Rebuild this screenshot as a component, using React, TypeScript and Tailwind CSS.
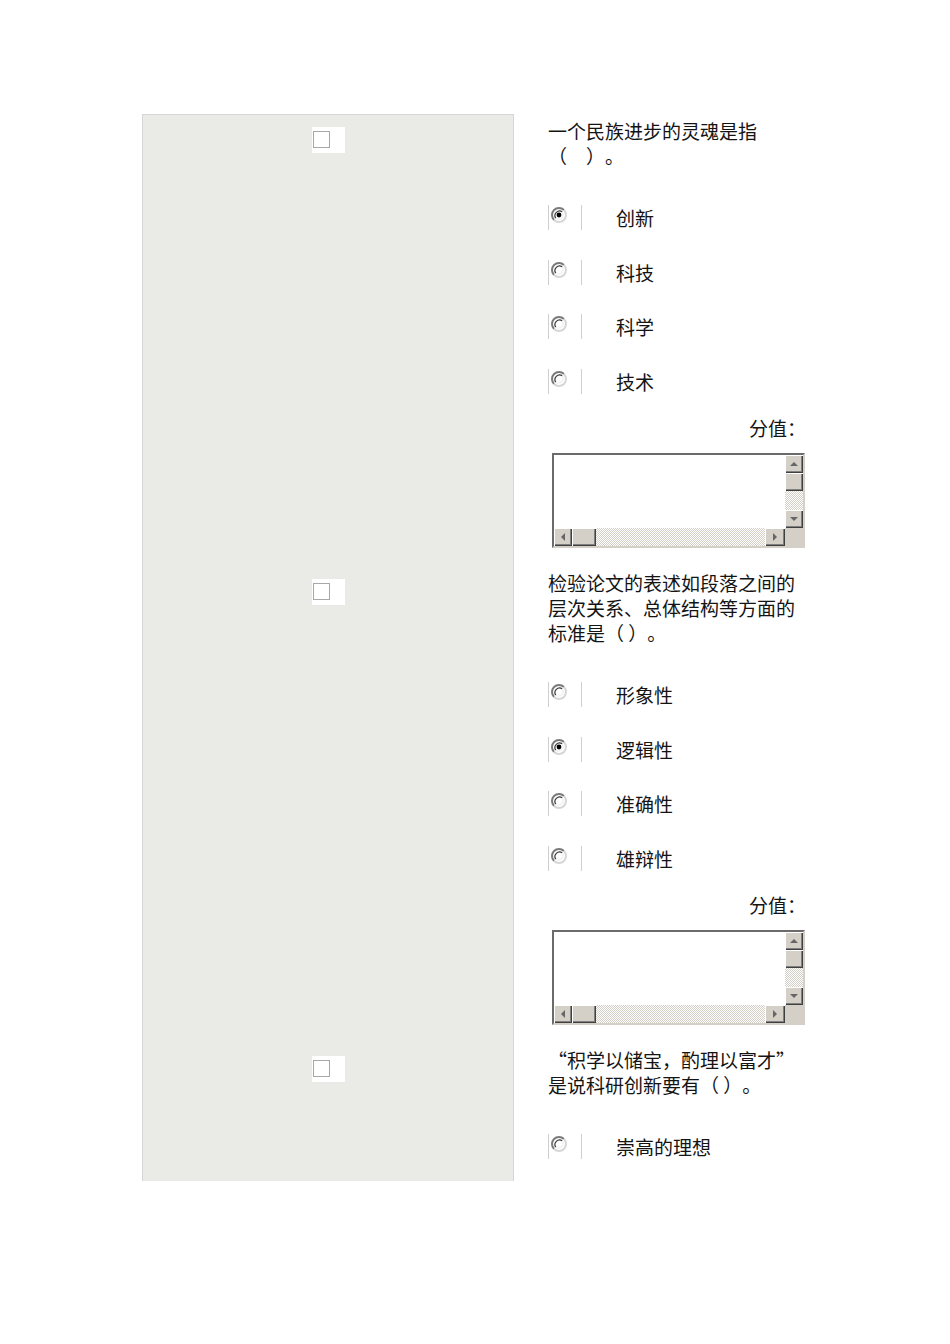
import React from "react";

const btn =
  "bg-[#d4d0c8] shadow-[inset_1px_1px_0_#ffffff,inset_-1px_-1px_0_#404040,inset_-2px_-2px_0_#808080] flex items-center justify-center";
const track =
  "bg-[image:repeating-conic-gradient(#d4d0c8_0%_25%,#ffffff_0%_50%)] bg-[length:2px_2px]";

function Arrow({ dir }: { dir: "up" | "down" | "left" | "right" }) {
  const pts: Record<string, string> = {
    up: "0,4 8,4 4,0",
    down: "0,0 8,0 4,4",
    left: "4,0 4,8 0,4",
    right: "0,0 0,8 4,4",
  };
  const vertical = dir === "up" || dir === "down";
  return (
    <svg width={vertical ? 8 : 4} height={vertical ? 4 : 8} viewBox={vertical ? "0 0 8 4" : "0 0 4 8"}>
      <polygon points={pts[dir]} fill="#666666" />
    </svg>
  );
}

function ScrollBox() {
  return (
    <div className="ml-[4px] w-[253px] h-[95px] border-2 border-t-[#6b6b6b] border-l-[#6b6b6b] border-b-[#d4d0c8] border-r-[#d4d0c8] flex flex-col">
      <div className="flex h-[73px]">
        <div className="flex-1 bg-white" />
        <div className="w-[18px] flex flex-col">
          <div className={`h-[18px] ${btn}`}>
            <Arrow dir="up" />
          </div>
          <div className={`h-[18px] ${btn}`} />
          <div className={`flex-1 ${track}`} />
          <div className={`h-[18px] ${btn}`}>
            <Arrow dir="down" />
          </div>
        </div>
      </div>
      <div className="flex h-[18px]">
        <div className="flex-1 flex">
          <div className={`w-[18px] ${btn}`}>
            <Arrow dir="left" />
          </div>
          <div className={`w-[24px] ${btn}`} />
          <div className={`flex-1 ${track}`} />
          <div className={`w-[20px] ${btn}`}>
            <Arrow dir="right" />
          </div>
        </div>
        <div className="w-[18px] bg-[#d4d0c8]" />
      </div>
    </div>
  );
}

function Radio({ checked }: { checked: boolean }) {
  return (
    <div className="w-[34px] h-[25px] bg-white border-l border-r border-[#cfcfcf] pl-[2px] pt-[2px] shrink-0">
      <svg width="16" height="16" viewBox="0 0 16 16" className="block">
        <circle cx="8" cy="8" r="7" fill="#ffffff" />
        <path d="M12.95 3.05 A7 7 0 0 0 3.05 12.95" stroke="#7a7a7a" strokeWidth="2" fill="none" />
        <path d="M3.05 12.95 A7 7 0 0 0 12.95 3.05" stroke="#d6d6d6" strokeWidth="2" fill="none" />
        <path d="M11.2 4.8 A4.6 4.6 0 0 0 4.8 11.2" stroke="#3a3a3a" strokeWidth="1.2" fill="none" />
        <path d="M4.8 11.2 A4.6 4.6 0 0 0 11.2 4.8" stroke="#eeeeee" strokeWidth="1.2" fill="none" />
        {checked && <circle cx="8" cy="8" r="2.4" fill="#000000" />}
      </svg>
    </div>
  );
}

function Option({ label, checked, first }: { label: string; checked?: boolean; first?: boolean }) {
  return (
    <div className={`flex items-center h-[25px] ${first ? "mt-[37px]" : "mt-[29.5px]"}`}>
      <Radio checked={!!checked} />
      <span className="ml-[34px] leading-[25px]">{label}</span>
    </div>
  );
}

function CheckCell({ first }: { first?: boolean }) {
  return (
    <div
      className={`w-[372px] shrink-0 bg-[#eaebe6] border-l border-r border-[#d6d6d2] flex justify-center items-start ${
        first ? "border-t pt-[12px]" : "pt-[13px]"
      }`}
    >
      <div className="w-[33px] h-[26px] bg-white pl-px pt-[4px]">
        <div className="w-[17px] h-[17px] border border-[#a8a8a8] bg-white" />
      </div>
    </div>
  );
}

type Q = {
  lines: string[];
  options: string[];
  checked: number;
  score?: boolean;
  pb: string;
};

const questions: Q[] = [
  {
    lines: ["一个民族进步的灵魂是指", "（\u3000）。"],
    options: ["创新", "科技", "科学", "技术"],
    checked: 0,
    score: true,
    pb: "pb-[18px]",
  },
  {
    lines: ["检验论文的表述如段落之间的", "层次关系、总体结构等方面的", "标准是（ ）。"],
    options: ["形象性", "逻辑性", "准确性", "雄辩性"],
    checked: 1,
    score: true,
    pb: "pb-[18px]",
  },
  {
    lines: ["“积学以储宝，酌理以富才”", "是说科研创新要有（ ）。"],
    options: ["崇高的理想"],
    checked: -1,
    score: false,
    pb: "pb-[22px]",
  },
];

export default function App() {
  return (
    <div className="min-h-[1344px] w-[950px] bg-white pt-[114px] pl-[142px] font-['Noto_Sans_CJK_SC',sans-serif] text-[19px] text-[#141414] [text-spacing-trim:space-all]">
      <div className="flex flex-col w-[664px]">
        {questions.map((q, qi) => (
          <div key={qi} className="flex">
            <CheckCell first={qi === 0} />
            <div className={`pl-[34px] w-[292px] pt-[4px] ${q.pb}`}>
              <div className="leading-[25px] whitespace-nowrap">
                {q.lines.map((l, i) => (
                  <div key={i}>{l}</div>
                ))}
              </div>
              {q.options.map((o, oi) => (
                <Option key={oi} label={o} checked={oi === q.checked} first={oi === 0} />
              ))}
              {q.score && (
                <>
                  <div className="mt-[21px] leading-[25px] text-right">分值：</div>
                  <div className="mt-[13.5px]">
                    <ScrollBox />
                  </div>
                </>
              )}
            </div>
          </div>
        ))}
      </div>
    </div>
  );
}
